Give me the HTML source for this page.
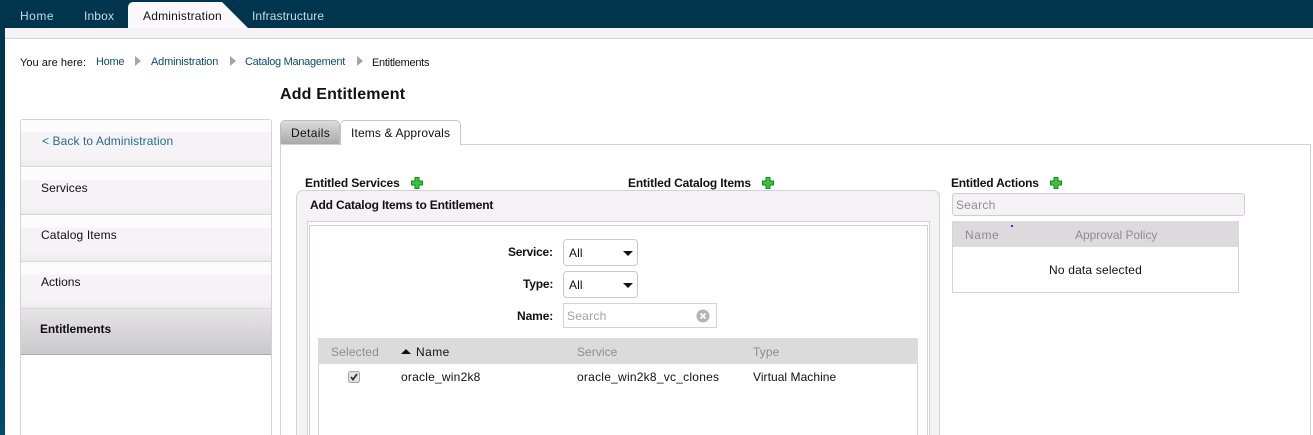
<!DOCTYPE html>
<html style="overflow:hidden;width:1313px;height:435px"><head><meta charset="utf-8">
<style>
html,body{margin:0;padding:0}
body{width:1313px;height:435px;overflow:hidden;position:relative;background:#fff;font-family:"Liberation Sans",Arial,sans-serif;font-size:12px;color:#111}
#w{position:absolute;left:0;top:0;width:1313px;height:435px;overflow:hidden;background:#fff}
.a{position:absolute}
.t{position:absolute;white-space:nowrap;line-height:14px;letter-spacing:.1px}
.b{font-weight:bold;letter-spacing:-.14px}
.lnk{color:#0f4a73}
.g{color:#8d8d8d}
.item{position:absolute;left:21px;width:250px;height:46px;background:linear-gradient(#fdfbfd 0,#fdfbfd 12px,#f6f3f6 13px,#f5f3f5 38px,#ececec 46px);border-bottom:1px solid #d8d6d8}
.sel{position:absolute;left:563px;width:75px;height:27px;box-sizing:border-box;border:1px solid #c9c9c9;border-radius:4px;background:#fff}
.arr{position:absolute;width:0;height:0;border-left:5px solid transparent;border-right:5px solid transparent;border-top:5px solid #111}
.crumb{position:absolute;top:56px;width:0;height:0;border-top:5px solid transparent;border-bottom:5px solid transparent;border-left:6px solid #a5a5a5}
</style></head><body><div id="w">
<!-- page frame -->
<div class="a" style="left:0;top:0;width:1313px;height:28px;background:#00354e"></div>
<div class="a" style="left:0;top:0;width:5px;height:435px;background:linear-gradient(#00354e 0,#00354e 110px,#004a6b 435px)"></div>
<div class="a" style="left:5px;top:28px;width:1308px;height:10px;background:#f6f2f6;border-bottom:1px solid #d4d2d4;border-top-left-radius:6px"></div>
<!-- nav -->
<svg class="a" style="left:126px;top:0" width="126" height="29"><path d="M2 28V8Q2 2 8 2H96L122 28Z" fill="#fbf8fb"/></svg>
<div class="t" style="left:20px;top:9px;color:#c6dbe6;letter-spacing:.5px">Home</div>
<div class="t" style="left:84px;top:9px;color:#c6dbe6;letter-spacing:.15px">Inbox</div>
<div class="t" style="left:143px;top:9px;color:#111;letter-spacing:.2px">Administration</div>
<div class="t" style="left:252px;top:9px;color:#c6dbe6;letter-spacing:.1px">Infrastructure</div>
<!-- breadcrumb -->
<div class="t" style="left:20px;top:56px;font-size:11px;letter-spacing:.03px">You are here:</div>
<div class="t lnk" style="left:96px;top:55px;font-size:11px;letter-spacing:-.3px">Home</div>
<div class="crumb" style="left:135px"></div>
<div class="t lnk" style="left:151px;top:55px;font-size:11px;letter-spacing:-.18px">Administration</div>
<div class="crumb" style="left:230px"></div>
<div class="t lnk" style="left:245px;top:55px;font-size:11px;letter-spacing:-.29px">Catalog Management</div>
<div class="crumb" style="left:357px"></div>
<div class="t" style="left:372px;top:56px;font-size:11px;letter-spacing:-.28px">Entitlements</div>
<div class="t b" style="left:280px;top:85px;font-size:16px;line-height:20px;letter-spacing:.17px">Add Entitlement</div>
<!-- sidebar -->
<div class="a" style="left:20px;top:119px;width:250px;height:320px;border:1px solid #d4d2d4;border-bottom:0;border-radius:3px 3px 0 0;background:#fff"></div>
<div class="item" style="top:120px"></div>
<div class="item" style="top:168px"></div>
<div class="item" style="top:215px"></div>
<div class="item" style="top:262px"></div>
<div class="a" style="left:21px;top:309px;width:250px;height:45px;background:linear-gradient(#e6e4e6,#c9c8ca);border-bottom:1px solid #a9a8aa"></div>
<div class="t" style="left:42px;top:134px;color:#28699b;letter-spacing:.09px">&lt; Back to Administration</div>
<div class="t" style="left:41px;top:181px;letter-spacing:.08px">Services</div>
<div class="t" style="left:41px;top:228px;letter-spacing:.14px">Catalog Items</div>
<div class="t" style="left:41px;top:275px;letter-spacing:.02px">Actions</div>
<div class="t b" style="left:40px;top:322px;letter-spacing:-.08px">Entitlements</div>
<!-- tabs + panel -->
<div class="a" style="left:280px;top:144px;width:1029px;height:300px;border:1px solid #d4d2d4;background:#fff"></div>
<div class="a" style="left:280px;top:120px;width:60px;height:24px;background:linear-gradient(#dcdcdc,#a9a9a9);border-radius:5px 5px 0 0;border:1px solid #bdbdbd;border-bottom:0;box-sizing:border-box"></div>
<div class="a" style="left:340px;top:120px;width:121px;height:25px;box-sizing:border-box;background:#fff;border:1px solid #c6c6c6;border-bottom:0;border-radius:5px 5px 0 0"></div>
<div class="t" style="left:291px;top:126px;letter-spacing:.35px">Details</div>
<div class="t" style="left:351px;top:126px;letter-spacing:.14px">Items &amp; Approvals</div>
<!-- entitled headings -->
<div class="t b" style="left:305px;top:176px;letter-spacing:-.12px">Entitled Services</div>
<div class="t b" style="left:628px;top:176px;letter-spacing:-.14px">Entitled Catalog Items</div>
<div class="t b" style="left:951px;top:176px;letter-spacing:-.2px">Entitled Actions</div>
<svg class="a" style="left:411px;top:177px" width="12" height="12"><path d="M4 .5H8V4H11.5V8H8V11.5H4V8H.5V4H4Z" fill="#37c43c" stroke="#0f8a1c" stroke-linejoin="round"/></svg>
<svg class="a" style="left:762px;top:177px" width="12" height="12"><path d="M4 .5H8V4H11.5V8H8V11.5H4V8H.5V4H4Z" fill="#37c43c" stroke="#0f8a1c" stroke-linejoin="round"/></svg>
<svg class="a" style="left:1050px;top:177px" width="12" height="12"><path d="M4 .5H8V4H11.5V8H8V11.5H4V8H.5V4H4Z" fill="#37c43c" stroke="#0f8a1c" stroke-linejoin="round"/></svg>
<!-- right column -->
<div class="a" style="left:952px;top:193px;width:293px;height:23px;box-sizing:border-box;border:1px solid #cfcdcf;border-radius:3px;background:#f5f2f6"></div>
<div class="t g" style="left:956px;top:198px;letter-spacing:.25px">Search</div>
<div class="a" style="left:952px;top:221px;width:287px;height:72px;box-sizing:border-box;border:1px solid #d4d2d4;background:#fff"></div>
<div class="a" style="left:953px;top:221px;width:286px;height:26px;background:#dcdadd"></div>
<div class="t g" style="left:965px;top:228px;letter-spacing:.55px">Name</div>
<div class="t g" style="left:1075px;top:228px;letter-spacing:-.02px">Approval Policy</div>
<div class="a" style="left:1011px;top:225px;width:2px;height:2px;background:#3a3ac0"></div>
<div class="t" style="left:1049px;top:263px;letter-spacing:.18px">No data selected</div>
<!-- dialog -->
<div class="a" style="left:296px;top:190px;width:644px;height:260px;box-sizing:border-box;border:1px solid #d4d2d4;border-radius:7px 7px 0 0;background:#f5f2f6"></div>
<div class="t b" style="left:310px;top:198px;letter-spacing:-.17px">Add Catalog Items to Entitlement</div>
<div class="a" style="left:307px;top:221px;width:623px;height:230px;box-sizing:border-box;border:1px solid #d4d2d4;background:#fff"></div>
<div class="a" style="left:309px;top:225px;width:619px;height:230px;box-sizing:border-box;border:1px solid #d4d2d4;background:#fff"></div>
<!-- filter form -->
<div class="t b" style="left:508px;top:245px;letter-spacing:-.25px">Service:</div>
<div class="t b" style="left:523px;top:277px;letter-spacing:-.2px">Type:</div>
<div class="t b" style="left:517px;top:309px;letter-spacing:-.1px">Name:</div>
<div class="sel" style="top:239px"></div>
<div class="sel" style="top:271px"></div>
<div class="t" style="left:569px;top:246px">All</div>
<div class="t" style="left:569px;top:278px">All</div>
<div class="arr" style="left:623px;top:251px"></div>
<div class="arr" style="left:623px;top:283px"></div>
<div class="a" style="left:563px;top:303px;width:154px;height:25px;box-sizing:border-box;border:1px solid #d4d2d4;background:#fff"></div>
<div class="t g" style="left:567px;top:309px;letter-spacing:.25px;color:#a0a0a0">Search</div>
<svg class="a" style="left:696px;top:309px" width="14" height="14"><circle cx="7" cy="7" r="6.5" fill="#b5b5b5"/><path d="M4.5 4.5L9.5 9.5M9.5 4.5L4.5 9.5" stroke="#fff" stroke-width="1.8"/></svg>
<!-- table -->
<div class="a" style="left:318px;top:338px;width:600px;height:110px;box-sizing:border-box;border:1px solid #d4d2d4;background:#fff"></div>
<div class="a" style="left:318px;top:338px;width:600px;height:26px;background:#dcdadd"></div>
<div class="t g" style="left:331px;top:345px;letter-spacing:.16px">Selected</div>
<div class="a" style="left:401px;top:349px;width:0;height:0;border-left:5px solid transparent;border-right:5px solid transparent;border-bottom:5px solid #111"></div>
<div class="t" style="left:416px;top:345px;letter-spacing:.45px">Name</div>
<div class="t g" style="left:577px;top:345px;letter-spacing:.05px">Service</div>
<div class="t g" style="left:753px;top:345px;letter-spacing:.1px">Type</div>
<svg class="a" style="left:348px;top:371px" width="12" height="12"><rect x=".5" y=".5" width="11" height="11" rx="2" fill="#e2e2e2" stroke="#a5a5a5"/><path d="M3 6L5 8.5L9 3" fill="none" stroke="#333" stroke-width="1.8"/></svg>
<div class="t" style="left:401px;top:370px;letter-spacing:.22px">oracle_win2k8</div>
<div class="t" style="left:577px;top:370px;letter-spacing:.24px">oracle_win2k8_vc_clones</div>
<div class="t" style="left:753px;top:370px;letter-spacing:.05px">Virtual Machine</div>
</div></body></html>
